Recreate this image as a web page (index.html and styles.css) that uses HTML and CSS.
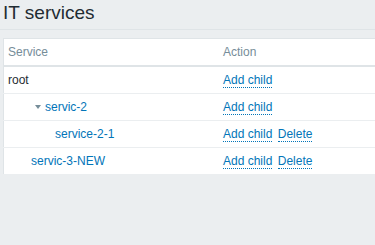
FILE: index.html
```html
<!DOCTYPE html>
<html>
<head>
	<meta charset="UTF-8">
	<title>IT services</title>
	<link rel="stylesheet" href="styles.css">
</head>
<body>

	<div class="header-title">
		<h1>IT services</h1>
	</div>

	<div class="table-wrap">
		<table class="list-table">
			<thead>
				<tr>
					<th class="col-service">Service</th>
					<th>Action</th>
				</tr>
			</thead>
			<tbody>
				<tr>
					<td class="level-0">root</td>
					<td><a href="#" class="link-action">Add child</a></td>
				</tr>
				<tr>
					<td class="level-1 has-children"><span class="arrow"></span><a href="#">servic-2</a></td>
					<td><a href="#" class="link-action">Add child</a></td>
				</tr>
				<tr>
					<td class="level-2"><a href="#">service-2-1</a></td>
					<td><a href="#" class="link-action">Add child</a> <a href="#" class="link-action">Delete</a></td>
				</tr>
				<tr>
					<td class="level-1"><a href="#">servic-3-NEW</a></td>
					<td><a href="#" class="link-action">Add child</a> <a href="#" class="link-action">Delete</a></td>
				</tr>
			</tbody>
		</table>
	</div>

</body>
</html>
```

FILE: styles.css
```css
html, body {
	margin: 0;
	padding: 0;
	width: 100%;
	height: 100%;
	background: #ebeef0;
	font-family: "Liberation Sans", Arial, sans-serif;
	font-size: 12px;
	color: #1f2c33;
	overflow: hidden;
}

.header-title {
	height: 30px;
	border-bottom: 1px solid #dfe4e7;
	box-sizing: border-box;
}

.header-title h1 {
	margin: 0;
	padding: 2px 0 0 3px;
	font-size: 19px;
	font-weight: normal;
	line-height: 22px;
	color: #1f2c33;
}

.table-wrap {
	margin: 8px 0 0 3px;
	width: 400px;
}

.list-table {
	width: 100%;
	border-collapse: collapse;
	background: #fff;
	border: 1px solid #dfe4e7;
}

.list-table th {
	height: 26px;
	padding: 0 4px;
	text-align: left;
	font-weight: normal;
	color: #768d99;
	border-bottom: 2px solid #dfe4e7;
}

.list-table td {
	height: 26px;
	padding: 0 4px;
	border-bottom: 1px solid #ebeef0;
	white-space: nowrap;
}

.col-service {
	width: 207px;
}

.level-1 {
	padding-left: 27px !important;
}

.level-1.has-children {
	padding-left: 31px !important;
}

.level-2 {
	padding-left: 51px !important;
}

.arrow {
	display: inline-block;
	width: 0;
	height: 0;
	margin: 0 4px 2px 0;
	border-left: 3px solid transparent;
	border-right: 3px solid transparent;
	border-top: 4px solid #768d99;
	vertical-align: middle;
}

a {
	color: #0275b8;
	text-decoration: none;
}

.link-action {
	border-bottom: 1px dotted #0275b8;
	margin-right: 2px;
}
```
